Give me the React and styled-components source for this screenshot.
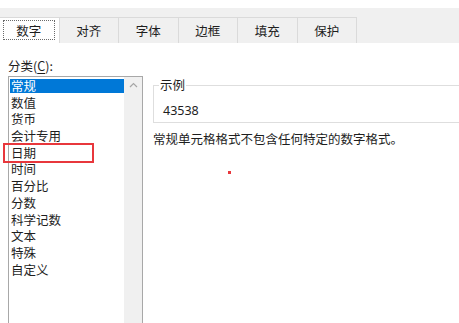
import React from "react";
import styled, { createGlobalStyle } from "styled-components";

const Global = createGlobalStyle`
  html, body { margin: 0; padding: 0; background: #ffffff; }
  body {
    width: 459px; height: 323px; overflow: hidden;
    font-family: "Noto Sans CJK SC", "Noto Sans", sans-serif;
    color: #1e1e1e;
  }
`;

const Page = styled.div`
  width: 459px;
  height: 323px;
  overflow: hidden;
  padding-top: 8px;
  box-sizing: border-box;
`;

const TabStrip = styled.div`
  height: 35px;
  background: #f0f0f0;
  display: flex;
  align-items: flex-end;
  box-sizing: border-box;
`;

const Tab = styled.div`
  width: 59.5px;
  height: 26px;
  box-sizing: border-box;
  border-top: 1px solid #dadada;
  border-right: 1px solid #dadada;
  background: ${(p) => (p.$active ? "#ffffff" : "#f0f0f0")};
  display: flex;
  align-items: center;
  justify-content: center;
  font-size: 12.5px;
  color: #1e1e1e;
  padding: ${(p) => (p.$active ? "2px 4px 3px 3px" : "0")};
`;

const Focus = styled.div`
  flex: 1;
  align-self: stretch;
  border: 1px dotted #6a6a6a;
  display: flex;
  align-items: center;
  justify-content: center;
`;

const Body = styled.div`
  padding: 15px 0 0 8px;
  position: relative;
`;

const CatLabel = styled.div`
  font-size: 12.5px;
  line-height: 16px;
  height: 18px;
  & u { text-decoration: underline; text-underline-offset: 2px; }
`;

const Columns = styled.div`
  display: grid;
  grid-template-columns: 135px 1fr;
  column-gap: 10px;
`;

const ListBox = styled.div`
  position: relative;
  height: 260px;
  border: 1px solid #a8a8a8;
  border-bottom: none;
  box-sizing: border-box;
  display: flex;
`;

const ListItems = styled.div`
  flex: 1;
  padding: 1px 0 0 1px;
`;

const Row = styled.div`
  height: 16.7px;
  line-height: 16.7px;
  font-size: 12.5px;
  padding-left: 1px;
  background: ${(p) =>
    p.$selected
      ? "linear-gradient(to bottom, transparent 0, transparent 1.2px, #0078d7 1.2px, #0078d7 15.2px, transparent 15.2px)"
      : "transparent"};
  color: ${(p) => (p.$selected ? "#ffffff" : "#1e1e1e")};
`;

const ScrollBar = styled.div`
  width: 18px;
  background: #f0f0f0;
  display: flex;
  justify-content: center;
  padding-top: 5px;
  box-sizing: border-box;
`;

const Mark = styled.div`
  position: absolute;
  left: -6px;
  top: 66px;
  width: 91px;
  height: 20px;
  border: 2px solid #e8373c;
  box-sizing: border-box;
`;

const Right = styled.div`
  padding-top: 1px;
  position: relative;
`;

const Sample = styled.fieldset`
  margin: 0;
  width: 400px;
  border: 1px solid #dedede;
  padding: 9px 5px 2px 5px;
  box-sizing: border-box;
`;

const SampleLegend = styled.legend`
  padding: 0 1px;
  font-size: 12.5px;
  line-height: 16px;
`;

const SampleValue = styled.div`
  font-family: "Noto Sans", sans-serif;
  font-size: 12.5px;
  line-height: 18px;
  padding-left: 4px;
  color: #1e1e1e;
`;

const Desc = styled.div`
  margin-top: 7px;
  font-size: 12.5px;
  line-height: 17px;
`;

const Dot = styled.div`
  position: absolute;
  left: 75px;
  top: 95px;
  width: 3px;
  height: 3px;
  background: #e8373c;
`;

const tabs = ["数字", "对齐", "字体", "边框", "填充", "保护"];
const cats = ["常规", "数值", "货币", "会计专用", "日期", "时间", "百分比", "分数", "科学记数", "文本", "特殊", "自定义"];

export default function App() {
  return (
    <>
      <Global />
      <Page>
        <TabStrip>
          {tabs.map((t, i) => (
            <Tab key={t} $active={i === 0}>
              {i === 0 ? <Focus>{t}</Focus> : t}
            </Tab>
          ))}
        </TabStrip>
        <Body>
          <CatLabel>分类(<u>C</u>):</CatLabel>
          <Columns>
            <ListBox>
              <ListItems>
                {cats.map((c, i) => (
                  <Row key={c} $selected={i === 0}>{c}</Row>
                ))}
              </ListItems>
              <ScrollBar>
                <svg width="9" height="6" viewBox="0 0 9 6">
                  <polyline points="1,5 4.5,1.5 8,5" fill="none" stroke="#a6a6a6" strokeWidth="1.2" />
                </svg>
              </ScrollBar>
              <Mark />
            </ListBox>
            <Right>
              <Sample>
                <SampleLegend>示例</SampleLegend>
                <SampleValue>43538</SampleValue>
              </Sample>
              <Desc>常规单元格格式不包含任何特定的数字格式。</Desc>
              <Dot />
            </Right>
          </Columns>
        </Body>
      </Page>
    </>
  );
}
